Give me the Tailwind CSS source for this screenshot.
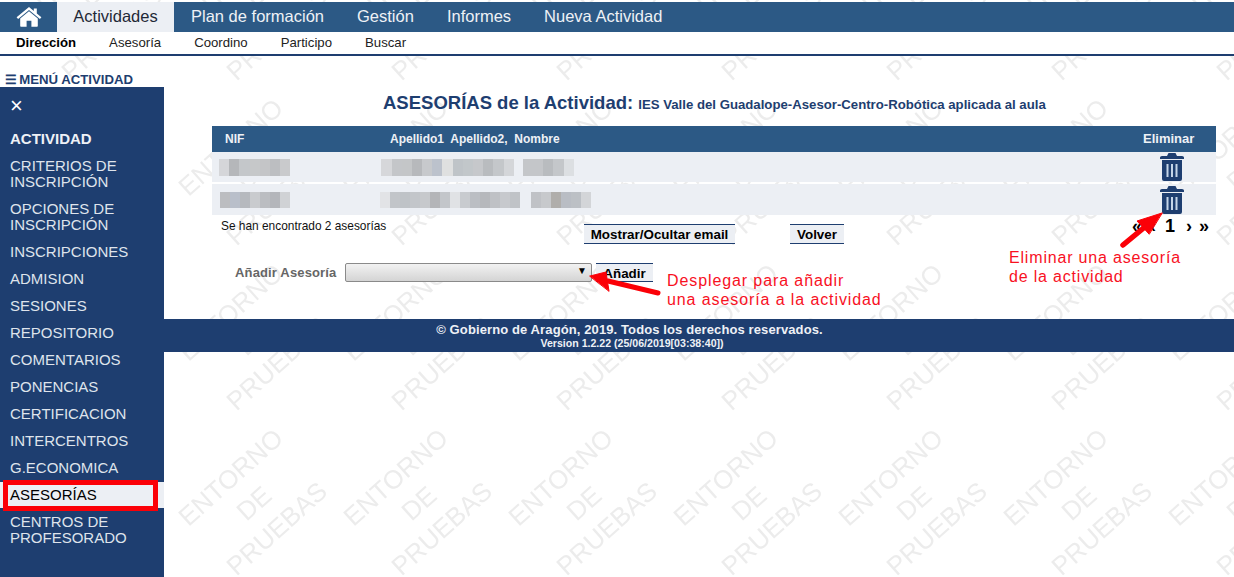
<!DOCTYPE html>
<html lang="es">

<head>
  <meta charset="UTF-8" />
  <title>Asesorías de la Actividad</title>
  <script src="https://cdn.jsdelivr.net/npm/@tailwindcss/browser@4"></script>
</head>

<body class="relative h-[577px] overflow-hidden bg-white font-['Liberation_Sans',Arial,sans-serif]">
  <!-- Watermark -->
  <svg class="absolute inset-0 w-full h-full" xmlns="http://www.w3.org/2000/svg">
    <defs>
      <pattern id="wm" width="165" height="165" patternUnits="userSpaceOnUse" patternTransform="translate(5 89)">
        <g transform="rotate(-42 82 82)" fill="#ececec" font-family="Liberation Sans" font-size="26" text-anchor="middle">
          <text x="82" y="59">ENTORNO</text>
          <text x="82" y="94">DE</text>
          <text x="82" y="128">PRUEBAS</text>
        </g>
      </pattern>
    </defs>
    <rect width="100%" height="100%" fill="url(#wm)" />
  </svg>

  <div class="relative">
    <!-- Top nav -->
    <nav class="mt-[2px] h-[30px] flex bg-[#2c5985] text-[16.5px] leading-[29px] text-[#eef1f6]">
      <a class="w-[57px] flex items-center justify-center">
        <svg class="w-[26px] h-[20px]" viewBox="0 0 26 20" fill="#fff">
          <path d="M13 4.200 4.200 11.400V19a.8.8 0 0 0 .8.8h5.600v-6h4.800v6H21a.8.8 0 0 0 .8-.8v-7.600z" />
          <path d="M13 0 0.600 10.200l1.500 1.800L13 3l10.900 9 1.500-1.800L20.800 6.400V1.400h-3v2.500z" />
        </svg>
      </a>
      <a class="w-[117px] bg-[#eceff4] text-center text-[#1f2937]">Actividades</a>
      <div class="flex gap-[33px] pl-[17px]">
        <a>Plan de formación</a>
        <a>Gestión</a>
        <a>Informes</a>
        <a>Nueva Actividad</a>
      </div>
    </nav>

    <!-- Sub nav -->
    <div class="h-[24px] flex gap-[33px] pl-4 border-b-2 border-[#1e3e70] bg-white text-[13.2px] leading-[21px] text-[#222]">
      <a class="font-bold text-black">Dirección</a>
      <a>Asesoría</a>
      <a>Coordino</a>
      <a>Participo</a>
      <a>Buscar</a>
    </div>

    <div class="flex">
      <!-- Sidebar -->
      <div class="w-[164px] shrink-0">
        <div class="h-[31px] pt-[16px] pl-[5px] text-[13.2px] leading-[15px] font-bold text-[#1e3e70]"><span class="mr-[-1.5px]">☰</span> MENÚ ACTIVIDAD</div>
        <aside class="h-[490px] bg-[#1e3e70] text-[15px] leading-[16px] text-[#dfe4ec]">
          <div class="h-[44px] pl-[10px] pt-[9px] text-[22px] leading-[20px] text-white">×</div>
          <div class="pl-[10px] font-bold text-[#eef1f6]">ACTIVIDAD</div>
          <ul class="mt-[11px] flex flex-col gap-[11px] pl-[10px]">
            <li>CRITERIOS DE<br />INSCRIPCIÓN</li>
            <li>OPCIONES DE<br />INSCRIPCIÓN</li>
            <li>INSCRIPCIONES</li>
            <li>ADMISION</li>
            <li>SESIONES</li>
            <li>REPOSITORIO</li>
            <li>COMENTARIOS</li>
            <li>PONENCIAS</li>
            <li>CERTIFICACION</li>
            <li>INTERCENTROS</li>
            <li>G.ECONOMICA</li>
            <li class="relative text-black">
              <span class="absolute left-[-10px] top-[-5px] w-[164px] h-[26px] bg-[#eceff4]"></span>
              <span class="absolute left-[-7px] top-[-7px] w-[155px] h-[31px] border-[5px] border-[#fb0007]"></span>
              <span class="relative">ASESORÍAS</span>
            </li>
            <li>CENTROS DE<br />PROFESORADO</li>
          </ul>
        </aside>
      </div>

      <!-- Main -->
      <main class="flex-1 min-w-0">
        <h1 class="h-[70px] pt-[36px] pl-[219px] text-[18.5px] leading-[22px] font-bold text-[#1e3e70] whitespace-nowrap">
          ASESORÍAS de la Actividad: <span class="text-[13.2px]">IES Valle del Guadalope-Asesor-Centro-Robótica aplicada al aula</span>
        </h1>

        <div class="ml-[48px] w-[1004px]">
          <div class="relative h-[26px] bg-[#2c5985] text-[12px] leading-[26px] font-bold text-[#eef1f6]">
            <span class="absolute left-[13px]">NIF</span>
            <span class="absolute left-[178px] whitespace-pre">Apellido1  Apellido2,  Nombre</span>
            <span class="absolute left-[931px] text-[13px]">Eliminar</span>
          </div>

          <div class="relative h-[30px] mb-[2px] bg-[#eceff4] flex pt-[7px]">
            <div class="flex h-[17px] ml-[7px]" data-w="10.2" data-cells="d5d6d9,b5b7ba,c4c7ca,c6c8c9,c4c5c7,bcbec1,c9cacc"></div>
            <div class="flex h-[17px] ml-[91px]" data-w="10.2" data-cells="d6d7da,c4c6c9,c4c6c8,b7b9bc,c7c9cc,bcc2cc,dfe0e0,bfc4c8,c2c7ca,c6c8cb,b9bcbf,c4c7ca,d4d6d9"></div>
            <div class="flex h-[17px] ml-[9px]" data-w="10.2" data-cells="c4c6c9,c4c6c9,b9bcbf,c4c7ca,dcdfe2"></div>
            <svg class="absolute left-[948px] top-[1px] w-[24px] h-[28px]" viewBox="0 0 24 28">
              <path fill="#1e3e70" d="M0 4.500Q0 3 2 3h5L8.500 0h7L17 3h5q2 0 2 1.500V6H0zM2 7h20v19q0 2-2 2H4q-2 0-2-2z" />
              <path fill="#c5d5e8" d="M6.500 11h2v13h-2zM11 11h2v13h-2zM15.500 11h2v13h-2z" />
            </svg>
          </div>
          <div class="relative h-[31px] bg-[#eceff4] flex pt-[8px]">
            <div class="flex h-[16px] ml-[8px]" data-w="10" data-cells="bcbdc0,b9bfca,b6b9be,c9cbce,bbbdc1,b4b6bb,d0d2d5"></div>
            <div class="flex h-[16px] ml-[90px]" data-w="10" data-cells="e2e3e6,c2c5c9,bfc3c7,c3c6ca,c7c9cc,b4b5b8,c3c6ca,e0e2e5,c8cbcf,bbbec3,b6b8bc,bfc1c5,c7c9cd,c0c3c7"></div>
            <div class="flex h-[16px] ml-[11px]" data-w="10" data-cells="c0c2c6,c7c9cc,b0aeab,b9bdc4,bcc0c5,d3d5d8"></div>
            <svg class="absolute left-[948px] top-[2px] w-[24px] h-[28px]" viewBox="0 0 24 28">
              <path fill="#1e3e70" d="M0 4.500Q0 3 2 3h5L8.500 0h7L17 3h5q2 0 2 1.500V6H0zM2 7h20v19q0 2-2 2H4q-2 0-2-2z" />
              <path fill="#c5d5e8" d="M6.500 11h2v13h-2zM11 11h2v13h-2zM15.500 11h2v13h-2z" />
            </svg>
          </div>

          <div class="relative h-[48px]">
            <span class="absolute left-[9px] top-[4px] text-[11.9px] leading-[14px] text-[#111]">Se han encontrado 2 asesorías</span>
            <button class="absolute left-[372px] top-[9px] w-[151px] h-[20px] border-y border-[#1e3e70] bg-[#eceff4] text-[13.4px] font-bold text-black">Mostrar/Ocultar email</button>
            <button class="absolute left-[578px] top-[9px] w-[54px] h-[20px] border-y border-[#1e3e70] bg-[#eceff4] text-[13.4px] font-bold text-black">Volver</button>
            <div class="absolute left-[920px] top-[1px] flex font-bold text-black text-[18px] leading-[20px]">
              <span>«</span><span class="ml-[8px]">‹</span><span class="ml-[9px]">1</span><span class="ml-[11px]">›</span><span class="ml-[7px]">»</span>
            </div>
          </div>

          <div class="relative h-[56px]">
            <span class="absolute left-[23px] top-[1px] text-[13px] leading-[18px] font-bold tracking-[0.15px] text-[#666]">Añadir Asesoría</span>
            <div class="absolute left-[133px] top-0 w-[247px] h-[19px] rounded-[2px] border border-[#8a8a8a] bg-linear-to-b from-[#f2f2f2] to-[#d4d4d4]">
              <span class="absolute right-[4px] top-0 text-[10px] leading-[14px] text-black">▼</span>
            </div>
            <button class="absolute left-[384px] top-0 w-[57px] h-[19px] border-y border-[#1e3e70] bg-[#eceff4] text-[13.4px] font-bold text-black">Añadir</button>
          </div>
        </div>

        <!-- Footer -->
        <footer class="h-[33px] bg-[#1e3e70] pt-[3px] text-center font-bold text-[#eef1f6]">
          <p class="pr-[139px] text-[13px] leading-[15px] tracking-[0.11px]">© Gobierno de Aragón, 2019. Todos los derechos reservados.</p>
          <p class="pr-[134px] text-[10.6px] leading-[12px]">Version 1.2.22 (25/06/2019[03:38:40])</p>
        </footer>
      </main>
    </div>
  </div>

  <!-- Annotations -->
  <svg class="absolute inset-0 w-full h-full pointer-events-none" xmlns="http://www.w3.org/2000/svg">
    <g fill="#fb0007" stroke="#fb0007" stroke-linecap="round" stroke-linejoin="round">
      <path d="M658 293 608 281" stroke-width="5" fill="none" />
      <path d="M590 276 606 272 609 291z" stroke-width="1" />
      <path d="M1123 245 1146 226" stroke-width="5.500" fill="none" />
      <path d="M1162 213 1137 221 1149 234z" stroke-width="1" />
    </g>
  </svg>
  <p class="absolute left-[667px] top-[271px] text-[16px] leading-[19px] tracking-[0.9px] text-[#f8111f]">Desplegar para añadir<br />una asesoría a la actividad</p>
  <p class="absolute left-[1009px] top-[248px] text-[16px] leading-[19px] tracking-[0.82px] text-[#f8111f]">Eliminar una asesoría<br />de la actividad</p>

  <script>
    // Mosaic cells that hide the personal data
    document.querySelectorAll("[data-cells]").forEach((row) => {
      row.dataset.cells.split(",").forEach((color) => {
        const cell = document.createElement("div");
        cell.className = "h-full";
        cell.style.width = row.dataset.w + "px";
        cell.style.background = "#" + color;
        row.appendChild(cell);
      });
    });
  </script>
</body>

</html>
